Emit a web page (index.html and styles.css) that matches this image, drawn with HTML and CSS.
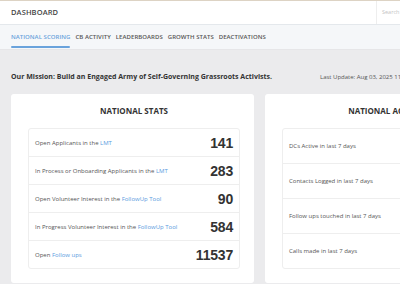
FILE: index.html
```html
<!DOCTYPE html>
<html lang="en">
<head>
  <meta charset="UTF-8">
  <meta name="viewport" content="width=device-width, initial-scale=1.0">
  <title>Dashboard</title>
  <link rel="stylesheet" href="styles.css">
</head>
<body>
  <div class="page">
    <header class="topbar">
      <div class="brand">DASHBOARD</div>
      <div class="search">Search</div>
    </header>

    <nav class="tabs">
      <a class="tab active">NATIONAL SCORING</a>
      <a class="tab">CB ACTIVITY</a>
      <a class="tab">LEADERBOARDS</a>
      <a class="tab">GROWTH STATS</a>
      <a class="tab">DEACTIVATIONS</a>
    </nav>

    <main class="content">
      <div class="mission-row">
        <div class="mission">Our Mission: Build an Engaged Army of Self-Governing Grassroots Activists.</div>
        <div class="updated">Last Update: Aug 03, 2025 11:42 AM</div>
      </div>

      <div class="cards">
        <section class="card">
          <h2 class="card-title">NATIONAL STATS</h2>
          <div class="stats">
            <div class="stat">
              <span class="label">Open Applicants in the <a>LMT</a></span>
              <span class="value">141</span>
            </div>
            <div class="stat">
              <span class="label">In Process or Onboarding Applicants in the <a>LMT</a></span>
              <span class="value">283</span>
            </div>
            <div class="stat">
              <span class="label">Open Volunteer Interest in the <a>FollowUp Tool</a></span>
              <span class="value">90</span>
            </div>
            <div class="stat">
              <span class="label">In Progress Volunteer Interest in the <a>FollowUp Tool</a></span>
              <span class="value">584</span>
            </div>
            <div class="stat">
              <span class="label">Open <a>Follow ups</a></span>
              <span class="value">11537</span>
            </div>
          </div>
        </section>

        <section class="card">
          <h2 class="card-title">NATIONAL ACTIVITY</h2>
          <div class="stats">
            <div class="stat">
              <span class="label">DCs Active in last 7 days</span>
              <span class="value">312</span>
            </div>
            <div class="stat">
              <span class="label">Contacts Logged in last 7 days</span>
              <span class="value">2140</span>
            </div>
            <div class="stat">
              <span class="label">Follow ups touched in last 7 days</span>
              <span class="value">967</span>
            </div>
            <div class="stat">
              <span class="label">Calls made in last 7 days</span>
              <span class="value">1875</span>
            </div>
          </div>
        </section>
      </div>
    </main>
  </div>
</body>
</html>
```

FILE: styles.css
```css
body {
  margin: 0;
  font-family: "Open Sans", Arial, sans-serif;
  background-color: #ebebed;
  color: #444;
  overflow: hidden;
}

.page {
  width: 520px;
}

.topbar {
  display: flex;
  align-items: stretch;
  height: 23px;
  background: #ffffff;
  border-top: 1px solid #ddd3c4;
  border-bottom: 1px solid #e4e8ec;
}

.brand {
  flex: 1;
  padding-left: 11px;
  line-height: 23px;
  font-size: 7.5px;
  font-weight: 600;
  letter-spacing: 0.1px;
  color: #444;
}

.search {
  width: 138px;
  padding-left: 5px;
  border-left: 1px solid #eeeeee;
  line-height: 23px;
  font-size: 5.5px;
  color: #c4c4c4;
}

.tabs {
  display: flex;
  gap: 5px;
  height: 24px;
  padding-left: 11px;
  background: #f5f7f9;
  border-bottom: 1px solid #e6e6e8;
}

.tab {
  position: relative;
  line-height: 24px;
  font-size: 6px;
  font-weight: 600;
  letter-spacing: 0.05px;
  color: #555;
}

.tab.active {
  color: #6aa3dc;
}

.tab.active::after {
  content: "";
  position: absolute;
  left: 0;
  right: 0;
  bottom: 1px;
  height: 2px;
  background: #6aa3dc;
  border-radius: 1px;
}

.content {
  padding: 0 11px;
}

.mission-row {
  display: flex;
  padding-top: 21px;
  margin-bottom: 11px;
  line-height: 12px;
}

.mission {
  width: 309px;
  flex-shrink: 0;
  font-size: 7px;
  font-weight: 700;
  color: #333;
}

.updated {
  font-size: 6px;
  color: #555;
  white-space: nowrap;
}

.cards {
  display: flex;
  gap: 11px;
}

.card {
  width: 243px;
  background: #ffffff;
  border-radius: 3px;
  padding: 0 14px 14px 17px;
  box-sizing: border-box;
}

.card-title {
  margin: 0;
  height: 34px;
  line-height: 34px;
  text-align: center;
  font-size: 8px;
  font-weight: 700;
  color: #333;
}

.stats {
  display: flex;
  flex-direction: column;
  height: 141px;
  box-sizing: border-box;
  border: 1px solid #eeeeee;
  border-radius: 3px;
}

.stat {
  flex: 1;
  display: flex;
  align-items: center;
  justify-content: space-between;
  padding: 0 6px;
  border-bottom: 1px solid #eeeeee;
}

.stat:last-child {
  border-bottom: none;
}

.label {
  font-size: 6px;
  color: #555;
}

.label a {
  color: #5b9be0;
}

.value {
  font-family: "Liberation Sans", Arial, sans-serif;
  font-size: 14px;
  font-weight: 700;
  letter-spacing: -0.2px;
  color: #333;
}
```
